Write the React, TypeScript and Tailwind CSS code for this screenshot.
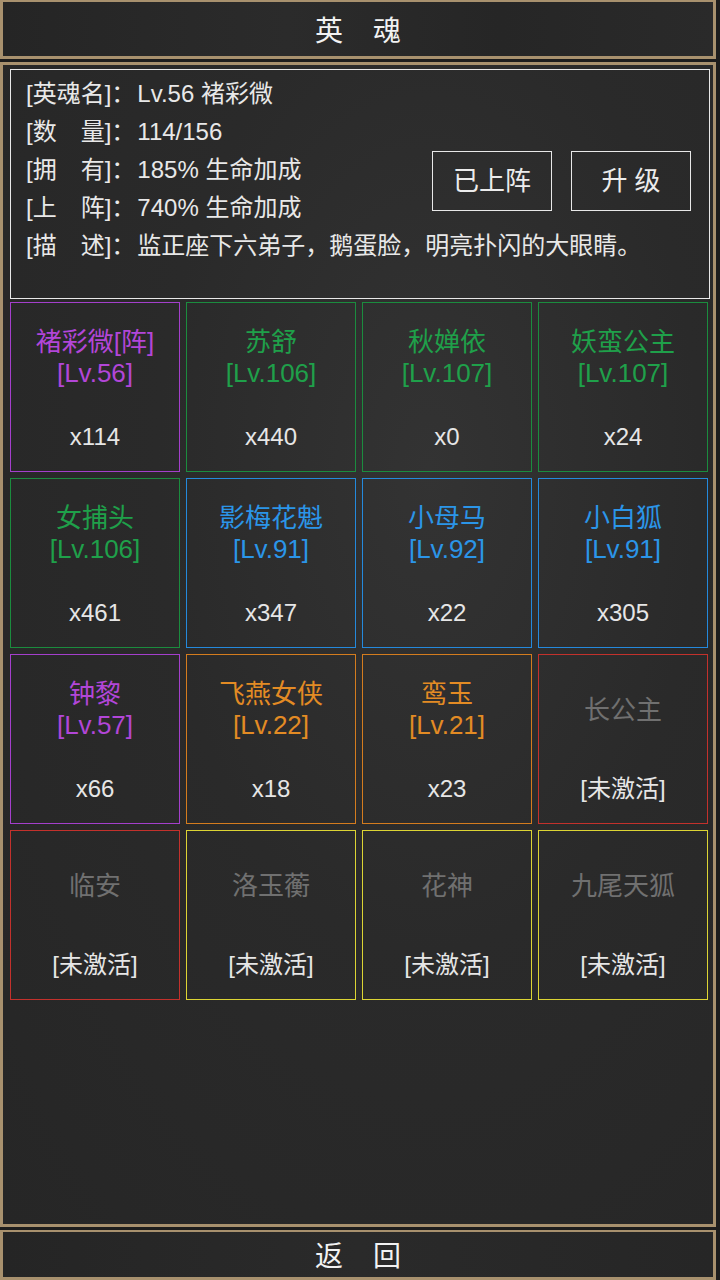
import React from 'react';

type Tier = 'purple' | 'green' | 'blue' | 'orange' | 'red' | 'yellow';

interface Soul {
  name: string;
  level?: number;
  count?: number;
  tier: Tier;
}

// full class names per quality tier
const TIER_STYLE: Record<Tier, { border: string; text: string }> = {
  purple: { border: 'border-[#a43fcc]', text: 'text-[#b246d8]' },
  green: { border: 'border-[#1b8c3e]', text: 'text-[#1fa04a]' },
  blue: { border: 'border-[#2489dc]', text: 'text-[#2b95e8]' },
  orange: { border: 'border-[#d47c1e]', text: 'text-[#e38b24]' },
  red: { border: 'border-[#c3312c]', text: 'text-[#707070]' },
  yellow: { border: 'border-[#dcd434]', text: 'text-[#707070]' },
};

const SOULS: Soul[] = [
  { name: '褚彩微[阵]', level: 56, count: 114, tier: 'purple' },
  { name: '苏舒', level: 106, count: 440, tier: 'green' },
  { name: '秋婵依', level: 107, count: 0, tier: 'green' },
  { name: '妖蛮公主', level: 107, count: 24, tier: 'green' },
  { name: '女捕头', level: 106, count: 461, tier: 'green' },
  { name: '影梅花魁', level: 91, count: 347, tier: 'blue' },
  { name: '小母马', level: 92, count: 22, tier: 'blue' },
  { name: '小白狐', level: 91, count: 305, tier: 'blue' },
  { name: '钟黎', level: 57, count: 66, tier: 'purple' },
  { name: '飞燕女侠', level: 22, count: 18, tier: 'orange' },
  { name: '鸾玉', level: 21, count: 23, tier: 'orange' },
  { name: '长公主', tier: 'red' },
  { name: '临安', tier: 'red' },
  { name: '洛玉蘅', tier: 'yellow' },
  { name: '花神', tier: 'yellow' },
  { name: '九尾天狐', tier: 'yellow' },
];

const INFO_LINES: [string, string][] = [
  ['[英魂名]：', 'Lv.56 褚彩微'],
  ['[数　量]：', '114/156'],
  ['[拥　有]：', '185% 生命加成'],
  ['[上　阵]：', '740% 生命加成'],
  ['[描　述]：', '监正座下六弟子，鹅蛋脸，明亮扑闪的大眼睛。'],
];

function SoulCell({ soul }: { soul: Soul }) {
  const style = TIER_STYLE[soul.tier];
  const active = soul.level !== undefined;
  return (
    <div className={`w-[170px] h-[170px] border ${style.border} flex flex-col items-center pt-[24px]`}>
      <div className={`h-[62px] flex flex-col items-center justify-center text-[26px] leading-[31px] ${style.text}`}>
        <span>{soul.name}</span>
        {active && <span>[Lv.{soul.level}]</span>}
      </div>
      <div className="mt-[33px] text-[24px] leading-[30px] text-[#e6e6e6]">
        {active ? `x${soul.count}` : '[未激活]'}
      </div>
    </div>
  );
}

export default function App() {
  return (
    <div
      className="w-[720px] h-[1280px] bg-[#1d1d1d] flex flex-col gap-[3px] overflow-hidden"
      style={{ fontFamily: '"Liberation Sans", "Noto Sans CJK SC", sans-serif' }}
    >
      {/* header */}
      <div className="w-[716px] h-[59px] shrink-0 border-x-[3px] border-t-2 border-b-[3px] border-[#a8916e] bg-[linear-gradient(90deg,#252525,#2b2b2b_40%,#262626_70%,#2a2a2a)] pt-[5px] flex items-center justify-center gap-[30px] text-[28px] text-[#f2f2f2]">
        <span>英</span>
        <span>魂</span>
      </div>

      {/* main panel */}
      <div className="w-[716px] h-[1165px] shrink-0 border-[3px] border-[#a8916e] bg-[radial-gradient(ellipse_at_60%_35%,#333333,#2a2a2a_45%,#262626)] pl-[7px] pt-[4px]">
        <div className="relative w-[700px] h-[230px] border border-[#e8e8e8] pl-[15px] pt-[5px] text-[24px] leading-[38px] text-[#e8e8e8]">
          {INFO_LINES.map(([label, value]) => (
            <div key={label} className="whitespace-nowrap">
              <span>{label}</span>
              <span className="ml-[2px]">{value}</span>
            </div>
          ))}
          <div className="absolute right-[18px] top-[81px] flex gap-[19px]">
            <div className="w-[120px] h-[60px] border border-[#e8e8e8] flex items-center justify-center text-[26px] text-[#ececec]">
              已上阵
            </div>
            <div className="w-[120px] h-[60px] border border-[#e8e8e8] flex items-center justify-center text-[26px] text-[#ececec]">
              升 级
            </div>
          </div>
        </div>

        <div className="mt-[3px] grid grid-cols-[repeat(4,170px)] gap-[6px]">
          {SOULS.map((s) => (
            <SoulCell key={s.name} soul={s} />
          ))}
        </div>
      </div>

      {/* footer */}
      <div className="w-[716px] h-[50px] shrink-0 border-[3px] border-t-2 border-[#a8916e] bg-[linear-gradient(90deg,#252525,#2a2a2a_50%,#262626)] pt-[4px] flex items-center justify-center gap-[30px] text-[28px] text-[#f2f2f2]">
        <span>返</span>
        <span>回</span>
      </div>
    </div>
  );
}
